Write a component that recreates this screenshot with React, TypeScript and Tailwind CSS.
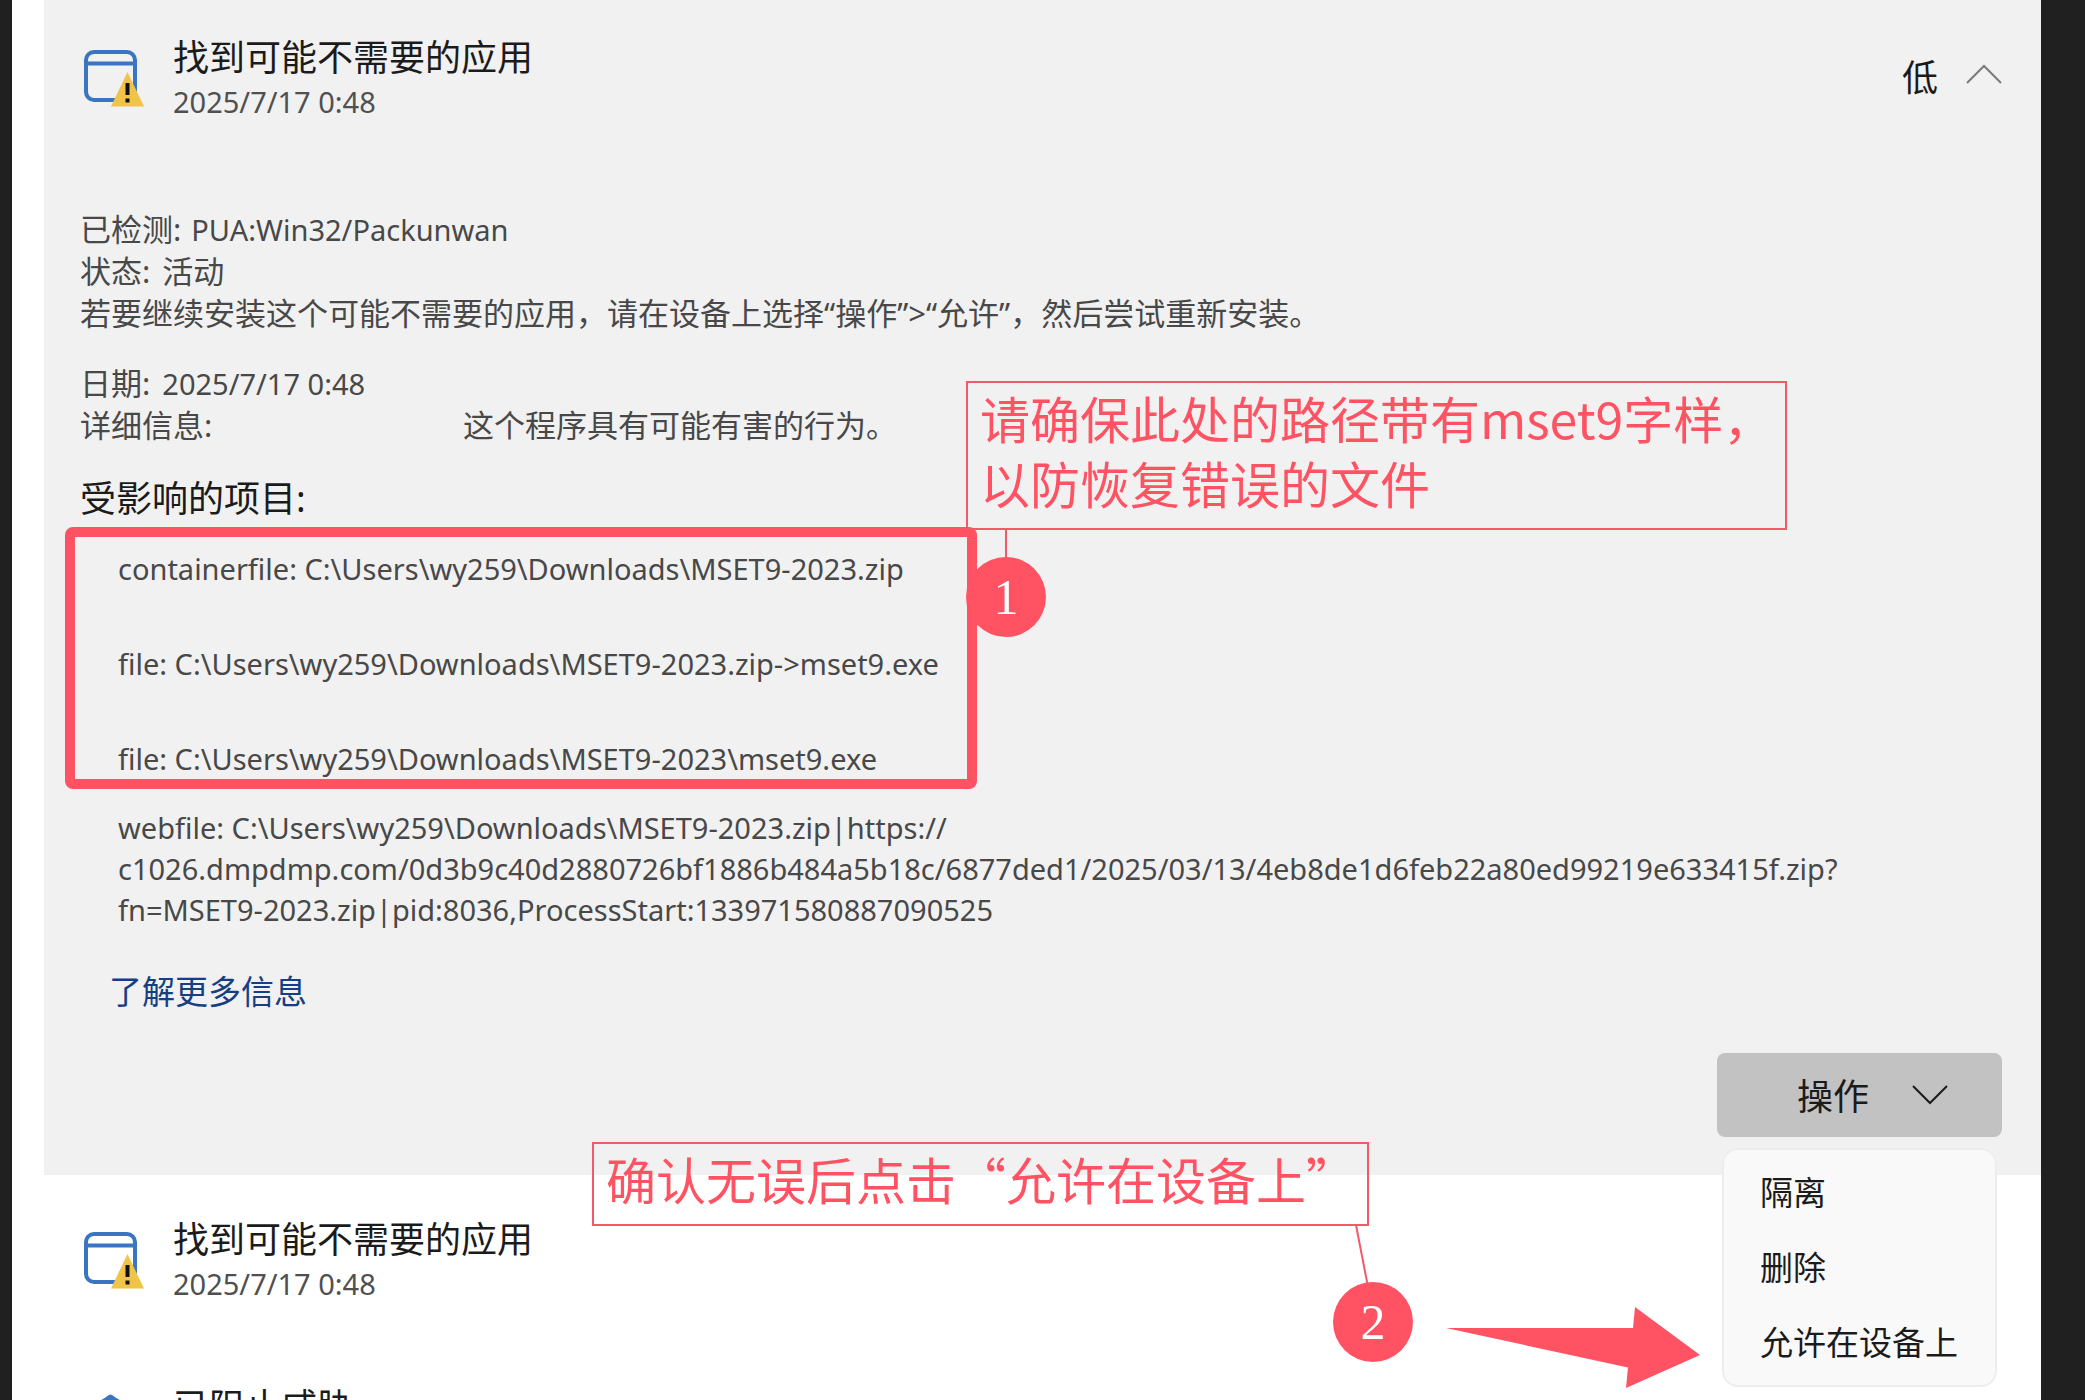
import React from "react";

const affectedFiles = [
  "containerfile: C:\\Users\\wy259\\Downloads\\MSET9-2023.zip",
  "file: C:\\Users\\wy259\\Downloads\\MSET9-2023.zip->mset9.exe",
  "file: C:\\Users\\wy259\\Downloads\\MSET9-2023\\mset9.exe",
];

const menuItems = ["隔离", "删除", "允许在设备上"];

function AppWarningIcon() {
  return (
    <svg className="h-[60px] w-[62px] shrink-0" viewBox="0 0 62 60" fill="none" aria-hidden="true">
      <rect x="3" y="3" width="49" height="48" rx="8" stroke="#3a76bf" strokeWidth="4" />
      <path d="M3 14.500H52" stroke="#3a76bf" strokeWidth="4" />
      <path d="M44.500 23L61 57.500H28Z" fill="#f0c448" />
      <path d="M44.500 34V46" stroke="#111" strokeWidth="4" />
      <path d="M44.500 49.500V53.500" stroke="#111" strokeWidth="4" />
    </svg>
  );
}

function ShieldIcon() {
  return (
    <svg className="h-[60px] w-[62px] shrink-0 overflow-visible" viewBox="0 0 62 60" fill="none" aria-hidden="true">
      <path
        d="M27.500 -1C21 4 13 8 5 8V28C5 42 14 50 27.500 56C41 50 50 42 50 28V8C42 8 34 4 27.500 -1Z"
        stroke="#3a76bf"
        strokeWidth="5"
        strokeLinejoin="round"
      />
    </svg>
  );
}

function Chevron({ up, className }: { up?: boolean; className: string }) {
  return (
    <svg className={className} viewBox="0 0 36 20" fill="none" aria-hidden="true">
      <path d={up ? "M1 19L18 2L35 19" : "M1 1L18 18L35 1"} stroke="currentColor" strokeWidth="2" />
    </svg>
  );
}

function ThreatHeader({
  icon,
  title,
  date,
  severity,
}: {
  icon: React.ReactNode;
  title: string;
  date?: string;
  severity?: string;
}) {
  return (
    <button type="button" className="flex w-full items-start pr-[39px] pl-[39px] text-left">
      <span className="mt-[13px]">{icon}</span>
      <span className="ml-[28px] flex flex-1 flex-col">
        <span className="text-[36px] leading-[44px] text-[#1b1b1b]">{title}</span>
        {date && <span className="text-[29px] leading-[44px] text-[#505050]">{date}</span>}
      </span>
      {severity && (
        <span className="mt-5 flex items-start gap-7">
          <span className="text-[36px] leading-[44px] text-[#1b1b1b]">{severity}</span>
          <Chevron up className="mt-2 h-5 w-9 text-[#7a7a7a]" />
        </span>
      )}
    </button>
  );
}

function StepBadge({ step, className }: { step: number; className: string }) {
  return (
    <span
      className={
        "absolute flex size-20 items-center justify-center rounded-full bg-[#ff5263] font-['Liberation_Serif',serif] text-[50px] leading-none text-white " +
        className
      }
    >
      {step}
    </span>
  );
}

export default function App() {
  return (
    <div className="flex h-screen overflow-hidden bg-white font-['Noto_Sans','Noto_Sans_CJK_SC',sans-serif]">
      <div className="w-3 shrink-0 bg-[#202020]" />
      <main className="min-w-0 flex-1 pl-8">
        <section className="bg-[#f1f1f1] pt-9 pb-[38px]">
          <ThreatHeader icon={<AppWarningIcon />} title="找到可能不需要的应用" date="2025/7/17 0:48" severity="低" />

          <div className="mt-[84px] pl-9 text-[31px] leading-[42px] text-[#484848]">
            <p>
              已检测:<span className="ml-2.5 text-[29px] leading-none">PUA:Win32/Packunwan</span>
            </p>
            <p>
              状态:<span className="ml-3">活动</span>
            </p>
            <p>若要继续安装这个可能不需要的应用，请在设备上选择“操作”&gt;“允许”，然后尝试重新安装。</p>
            <p className="mt-7">
              日期:<span className="ml-3 text-[29px] leading-none">2025/7/17 0:48</span>
            </p>
            <p className="flex">
              <span className="w-[383px]">详细信息:</span>
              <span>这个程序具有可能有害的行为。</span>
            </p>
          </div>

          <h2 className="mt-[31px] pl-9 text-[36px] leading-[44px] text-[#1b1b1b]">受影响的项目:</h2>

          <div className="relative mt-1.5 ml-[21px] w-fit">
            <ul className="flex flex-col gap-[55px] rounded-lg border-[10px] border-[#ff5263] pt-3 pr-7 pl-[43px] text-[29px] leading-[40px] text-[#484848]">
              {affectedFiles.map((file) => (
                <li key={file}>{file}</li>
              ))}
            </ul>
            <p className="absolute bottom-full left-full -mb-[3px] -ml-[11px] h-[149px] w-[821px] border-2 border-[#f25a69] pt-0.5 pl-3 font-['Noto_Sans_CJK_SC',sans-serif] text-[50px] leading-[65px] whitespace-nowrap text-[#ff5263]">
              请确保此处的路径带有mset9字样，
              <br />
              以防恢复错误的文件
            </p>
            <span className="absolute top-[3px] left-full ml-7 h-7 w-0.5 bg-[#f25a69]" />
            <StepBadge step={1} className="top-[30px] left-full -ml-[11px]" />
          </div>

          <p className="mt-[18px] pl-[74px] text-[29px] leading-[41px] text-[#484848]">
            webfile: C:\Users\wy259\Downloads\MSET9-2023.zip|https://
            <br />
            c1026.dmpdmp.com/0d3b9c40d2880726bf1886b484a5b18c/6877ded1/2025/03/13/4eb8de1d6feb22a80ed99219e633415f.zip?
            <br />
            fn=MSET9-2023.zip|pid:8036,ProcessStart:133971580887090525
          </p>

          <a href="#more" className="mt-[41px] ml-[65px] block w-fit text-[33px] leading-[42px] text-[#163e82]">
            了解更多信息
          </a>

          <div className="mt-10 flex justify-end pr-[39px]">
            <div className="relative">
              <button
                type="button"
                aria-haspopup="menu"
                aria-expanded="true"
                className="flex h-[84px] w-[285px] items-center justify-end gap-[43px] rounded-lg bg-[#c2c2c2] pr-[54px] text-[36px] text-[#1b1b1b]"
              >
                <span className="pt-1">操作</span>
                <Chevron className="h-5 w-9" />
              </button>

              <ul
                role="menu"
                className="absolute top-full right-[5px] z-10 mt-[11px] w-[275px] rounded-2xl border-2 border-[#ededed] bg-[#f9f9f9] py-[5px] text-[33px] text-[#1b1b1b]"
              >
                {menuItems.map((item) => (
                  <li key={item} role="none">
                    <button type="button" role="menuitem" className="h-[75px] w-full pl-9 text-left">
                      {item}
                    </button>
                  </li>
                ))}
              </ul>

              <p className="absolute top-[89px] right-[633px] h-[84px] w-[777px] border-2 border-[#f25a69] pt-0.5 pl-3 font-['Noto_Sans_CJK_SC',sans-serif] text-[50px] leading-[65px] whitespace-nowrap text-[#ff5263]">
                确认无误后点击“允许在设备上”
              </p>
              <svg className="absolute top-[172px] right-[632px] h-[62px] w-4" viewBox="0 0 16 62" fill="none" aria-hidden="true">
                <path d="M2 0L14 62" stroke="#f25a69" strokeWidth="2" />
              </svg>
              <StepBadge step={2} className="top-[229px] right-[589px]" />
              <svg className="absolute top-[254px] right-[302px] h-[81px] w-[254px]" viewBox="0 0 254 81" aria-hidden="true">
                <path d="M0 21H187L189 0L254 48L180 81L182 60.500Z" fill="#ff5263" />
              </svg>
            </div>
          </div>
        </section>

        <section className="pt-[43px]">
          <ThreatHeader icon={<AppWarningIcon />} title="找到可能不需要的应用" date="2025/7/17 0:48" />
        </section>
        <section className="pt-[79px]">
          <ThreatHeader icon={<ShieldIcon />} title="已阻止威胁" />
        </section>
      </main>
      <div className="w-11 shrink-0 bg-[#202020]" />
    </div>
  );
}
